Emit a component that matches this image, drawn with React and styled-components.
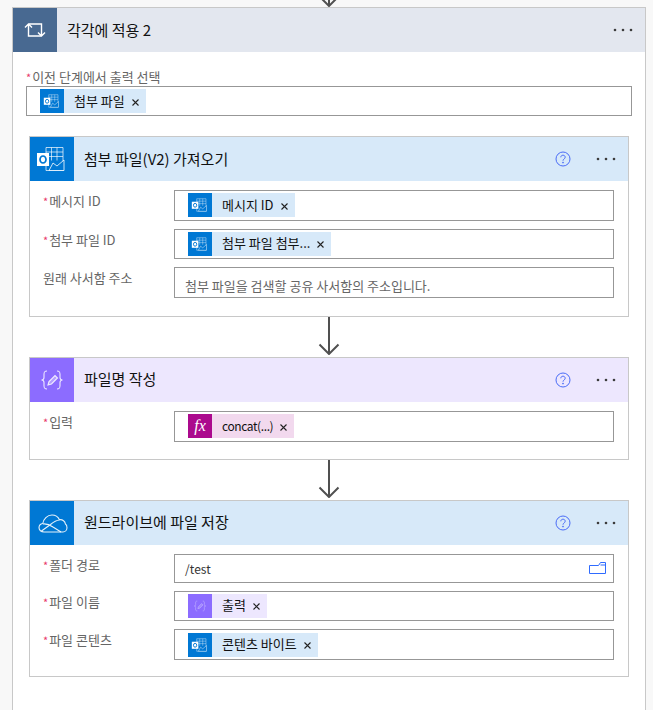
import React from 'react';
import styled, { createGlobalStyle } from 'styled-components';

const GlobalStyle = createGlobalStyle`
  html, body {
    margin: 0;
    height: 710px;
    overflow: hidden;
    background: #f8f8f8;
    font-family: "Noto Sans CJK KR", "Noto Sans", sans-serif;
  }
`;

const colors = {
  outlook: { icon: '#0078d4', tint: '#d7e9f9' },
  compose: { icon: '#8c6cff', tint: '#ede7fe' },
  drive: { icon: '#0078d4', tint: '#d7e9f9' },
  loop: { icon: '#486991', tint: '#e3e7ef' },
  fx: { icon: '#ab0a8d', tint: '#f2d9ee' },
};

const Page = styled.div`
  width: 634px;
  margin-left: 12px;
`;

const ArrowClip = styled.div`
  height: 7px;
  display: flex;
  justify-content: center;
  align-items: flex-end;
  overflow: hidden;
`;

const Connector = styled.div`
  height: 40px;
  display: flex;
  justify-content: center;
  svg { display: block; flex: none; }
`;

const Scope = styled.section`
  box-sizing: border-box;
  height: 720px;
  background: #fff;
  border: 1px solid #c8c8c8;
`;

const ScopeBody = styled.div`
  padding: 17px 13px 0;
`;

const ScopeLabel = styled.div`
  height: 17px;
  line-height: 16px;
  font-size: 13px;
  color: #666;
`;

const Star = styled.span`
  color: #e8386a;
  font-size: 11px;
  margin-right: 1px;
`;

const Steps = styled.div`
  margin: 20px 3px 0;
`;

const Card = styled.article`
  box-sizing: border-box;
  border: 1px solid #c8c8c8;
  background: #fff;
`;

const Header = styled.header`
  height: 44px;
  display: flex;
  align-items: center;
  background: ${p => colors[p.$kind].tint};
`;

const HeaderIcon = styled.div`
  width: 44px;
  height: 44px;
  flex: none;
  background: ${p => colors[p.$kind].icon};
  svg { display: block; }
`;

const Title = styled.h2`
  flex: 1;
  margin: 0 0 2px 10px;
  font-size: 15px;
  font-weight: 400;
  color: #111;
`;

const HelpIcon = styled.svg`
  width: 16px;
  height: 16px;
  margin-right: 25px;
  flex: none;
`;

const Dots = styled.svg`
  width: 20px;
  height: 4px;
  margin-right: ${p => p.$right}px;
  flex: none;
`;

const Body = styled.div`
  display: flex;
  flex-direction: column;
  gap: 8px;
  padding: 9px 14px ${p => p.$bottom}px 13px;
`;

const Row = styled.div`
  display: grid;
  grid-template-columns: 131px 1fr;
`;

const RowLabel = styled.label`
  font-size: 13px;
  line-height: 16px;
  padding-top: 3px;
  color: #666;
`;

const Field = styled.div`
  box-sizing: border-box;
  height: ${p => p.$height || 30.67}px;
  border: 1px solid #979797;
  background: #fff;
  display: flex;
  align-items: center;
  padding-left: 13px;
`;

const Chip = styled.span`
  height: 24px;
  display: inline-flex;
  align-items: center;
  background: ${p => colors[p.$kind].tint};
  color: #111;
  font-size: 13px;
`;

const ChipIcon = styled.span`
  width: 24px;
  height: 24px;
  flex: none;
  background: ${p => colors[p.$kind].icon};
  color: #fff;
  display: flex;
  align-items: center;
  justify-content: center;
  font-family: "Liberation Serif", serif;
  font-style: italic;
  font-size: 16px;
  svg { display: block; }
`;

const ChipText = styled.span`
  margin: -1px 0 1px 10px;
  white-space: nowrap;
  font-size: ${p => (p.$code ? 12 : 13)}px;
  letter-spacing: ${p => (p.$code ? -0.4 : 0)}px;
`;

const ChipClose = styled.svg`
  width: 7px;
  height: 7px;
  margin: 2px 7px 0 7px;
  flex: none;
`;

const Hint = styled.span`
  margin-left: -3px;
  padding-top: 6px;
  font-size: 13px;
  color: #666;
  white-space: nowrap;
`;

const Value = styled.span`
  flex: 1;
  margin-left: -3px;
  color: #333;
  font-size: 12px;
`;

const FolderIcon = styled.svg`
  width: 17px;
  height: 12px;
  margin-right: 7px;
  flex: none;
`;

const Arrow = () => (
  <svg width="24" height="38" viewBox="0 0 24 38" fill="none" stroke="#505050" strokeWidth="2">
    <path d="M12 0v37M2.5 27.5 12 37l9.500-9.500" />
  </svg>
);

const OutlookGlyph = ({ size = 44, opacity = 1 }) => (
  <svg width={size} height={size} viewBox="0 0 44 44" fill="none" opacity={opacity}>
    <path d="M16 10.500h17v23H16z" stroke="#fff" strokeOpacity=".7" />
    <path d="M21.500 10.500v13M27 10.500v13M16 15h17M16 19.500h17" stroke="#fff" strokeOpacity=".65" />
    <path d="M19 33.500h15V23L27 29l-4-3z" fill="#0078d4" stroke="#fff" strokeOpacity=".8" />
    <path d="M7 16h12v13H7z" fill="#fff" />
    <ellipse cx="13" cy="22.500" rx="3" ry="3.500" stroke="#0078d4" strokeWidth="1.700" />
  </svg>
);

const ComposeGlyph = ({ size = 44, opacity = 1 }) => (
  <svg width={size} height={size} viewBox="0 0 44 44" fill="none" stroke="#fff" strokeOpacity=".85" strokeWidth="1.100" opacity={opacity}>
    <path d="M17 13c-3 0-3 1.500-3 3.500v3c0 1.800-.7 2.500-2.500 2.500 1.800 0 2.500.7 2.500 2.500v3c0 2 0 3.500 3 3.500" />
    <path d="M27 13c3 0 3 1.500 3 3.500v3c0 1.800.7 2.500 2.500 2.500-1.800 0-2.500.7-2.500 2.500v3c0 2 0 3.500-3 3.500" />
    <path d="m18 27 1-3.500 6-6 2.500 2.500-6 6z" fill="#fff" fillOpacity=".35" />
  </svg>
);

const LoopGlyph = () => (
  <svg width="44" height="44" viewBox="0 0 44 44" fill="none" stroke="#fff" strokeWidth="1.400">
    <path d="M12 19.500 15.500 16l3.500 3.500M15.500 16.500V28H28" />
    <path d="M25 24.500l3.500 3.500 3.500-3.500M28.500 27.500V16H16" />
  </svg>
);

const DriveGlyph = () => (
  <svg width="44" height="44" viewBox="0 0 44 44" fill="none" stroke="#fff" strokeOpacity=".9" strokeWidth="1.100">
    <path d="M14 31c-3 0-5-2-5-4.200 0-2.200 1.600-4 3.800-4.300.6-4.600 4.500-8.500 9.200-8.500 3.500 0 6 1.800 7.500 4.700 3.200-.4 5.600 1.600 5.900 4.300 1.200.6 1.600 2.200 1.600 3.800 0 2.200-1.800 4.200-4 4.200z" />
    <path d="M13 23c4-.5 7 1 10 3l8 5M29.500 19c-3 .2-6 2-9 4.500L11.500 30" />
  </svg>
);

const glyphs = {
  outlook: OutlookGlyph,
  compose: ComposeGlyph,
  drive: DriveGlyph,
  loop: LoopGlyph,
};

const DotsIcon = ({ right }) => (
  <Dots $right={right} viewBox="0 0 20 4" fill="#3c3c3c">
    <circle cx="2" cy="2" r="1.300" />
    <circle cx="10" cy="2" r="1.300" />
    <circle cx="18" cy="2" r="1.300" />
  </Dots>
);

const Help = () => (
  <HelpIcon viewBox="0 0 16 16" fill="none" stroke="#4a6cf7">
    <circle cx="8" cy="8" r="7" />
    <path d="M5.800 6.300c0-1.300 1-2.100 2.200-2.100s2.200.8 2.200 2c0 1.800-2.200 1.700-2.200 3.500" />
    <circle cx="8" cy="11.600" r=".5" />
  </HelpIcon>
);

const ValueChip = ({ kind, text }) => {
  const Glyph = glyphs[kind];
  return (
    <Chip $kind={kind}>
      <ChipIcon $kind={kind}>
        {kind === 'fx' ? 'fx' : <Glyph size={24} opacity={kind === 'compose' ? 0.55 : 1} />}
      </ChipIcon>
      <ChipText $code={kind === 'fx'}>{text}</ChipText>
      <ChipClose viewBox="0 0 7 7" stroke="#222" strokeWidth="1.100">
        <path d="M.5.500l6 6M6.500.500l-6 6" />
      </ChipClose>
    </Chip>
  );
};

const StepRow = ({ label, required, height, children }) => (
  <Row>
    <RowLabel>
      {required && <Star>*</Star>}
      {label}
    </RowLabel>
    <Field $height={height}>{children}</Field>
  </Row>
);

const Step = ({ kind, title, bottom, children }) => {
  const Glyph = glyphs[kind];
  return (
    <Card>
      <Header $kind={kind}>
        <HeaderIcon $kind={kind}><Glyph /></HeaderIcon>
        <Title>{title}</Title>
        <Help />
        <DotsIcon right={12} />
      </Header>
      <Body $bottom={bottom}>{children}</Body>
    </Card>
  );
};

export default function App() {
  return (
    <Page>
      <GlobalStyle />
      <ArrowClip><Arrow /></ArrowClip>
      <Scope>
        <Header $kind="loop">
          <HeaderIcon $kind="loop"><LoopGlyph /></HeaderIcon>
          <Title>각각에 적용 2</Title>
          <DotsIcon right={12} />
        </Header>
        <ScopeBody>
          <ScopeLabel><Star>*</Star>이전 단계에서 출력 선택</ScopeLabel>
          <Field $height={30}>
            <ValueChip kind="outlook" text="첨부 파일" />
          </Field>
          <Steps>
            <Step kind="outlook" title="첨부 파일(V2) 가져오기" bottom={18}>
              <StepRow label="메시지 ID" required>
                <ValueChip kind="outlook" text="메시지 ID" />
              </StepRow>
              <StepRow label="첨부 파일 ID" required>
                <ValueChip kind="outlook" text="첨부 파일 첨부..." />
              </StepRow>
              <StepRow label="원래 사서함 주소">
                <Hint>첨부 파일을 검색할 공유 사서함의 주소입니다.</Hint>
              </StepRow>
            </Step>
            <Connector><Arrow /></Connector>
            <Step kind="compose" title="파일명 작성" bottom={17}>
              <StepRow label="입력" required>
                <ValueChip kind="fx" text="concat(...)" />
              </StepRow>
            </Step>
            <Connector><Arrow /></Connector>
            <Step kind="drive" title="원드라이브에 파일 저장" bottom={16}>
              <StepRow label="폴더 경로" required height={29}>
                <Value>/test</Value>
                <FolderIcon viewBox="0 0 17 12" fill="none" stroke="#2f6bff">
                  <path d="M.5 3.500h9l2-3h5v11H.5z" />
                  <path d="M11.500 3h5" />
                </FolderIcon>
              </StepRow>
              <StepRow label="파일 이름" required>
                <ValueChip kind="compose" text="출력" />
              </StepRow>
              <StepRow label="파일 콘텐츠" required>
                <ValueChip kind="outlook" text="콘텐츠 바이트" />
              </StepRow>
            </Step>
          </Steps>
        </ScopeBody>
      </Scope>
    </Page>
  );
}
